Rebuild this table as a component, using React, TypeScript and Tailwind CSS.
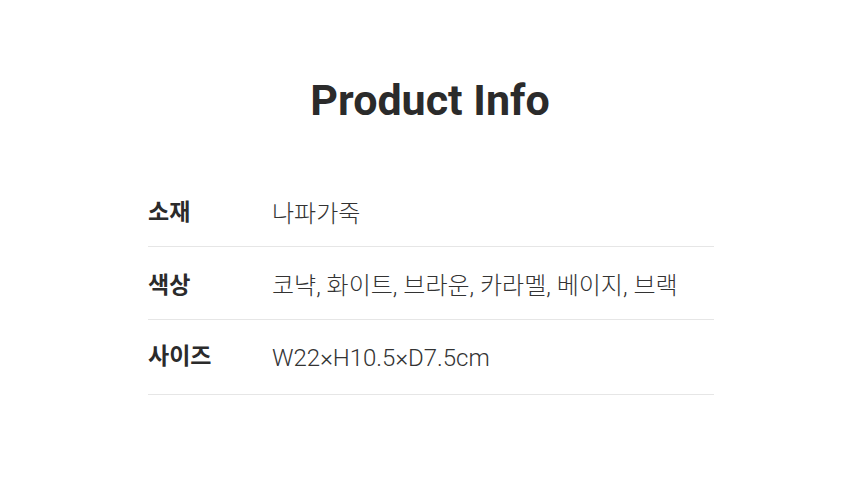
const rows = [
  { label: '소재', value: '나파가죽', h: 'h-[73px] pt-[7px]' },
  { label: '색상', value: '코냑, 화이트, 브라운, 카라멜, 베이지, 브랙', h: 'h-[73px] pt-[6px]' },
  { label: '사이즈', value: 'W22×H10.5×D7.5cm', h: 'h-[75px] pt-[1px]' },
];

export default function App() {
  return (
    <div
      className="w-[860px] h-[487px] bg-white flex flex-col items-center"
      style={{ fontFamily: 'Roboto, "Noto Sans CJK KR", sans-serif' }}
    >
      <h1 className="mt-[74px] h-[52px] leading-[52px] text-[43px] font-bold text-[#2b2b2b]">
        Product Info
      </h1>
      <div className="mt-[48px] ml-[2px] w-[566px]">
        {rows.map((r) => (
          <div key={r.label} className={`flex items-center border-b border-[#e6e6e6] ${r.h}`}>
            <div className="w-[124px] text-[23px] font-bold text-[#2b2b2b]">{r.label}</div>
            <div className="text-[24px] font-light text-[#333]">{r.value}</div>
          </div>
        ))}
      </div>
    </div>
  );
}
